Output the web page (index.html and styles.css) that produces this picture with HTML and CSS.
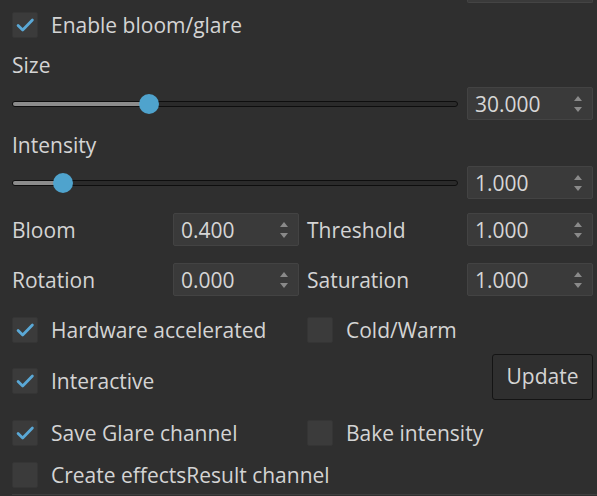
FILE: index.html
```html
<!DOCTYPE html>
<html>
<head>
<meta charset="utf-8">
<link rel="stylesheet" href="styles.css">
</head>
<body>
<div class="panel">
  <div class="stub-row"><div class="stub"></div></div>

  <div class="row cb-row first">
    <label class="check"><span class="box on"><svg viewBox="0 0 26 26"><path d="M5.5 13.5 L10.5 18.5 L21 7.5"/></svg></span><span class="txt">Enable bloom/glare</span></label>
  </div>

  <div class="label-row size-label">Size</div>
  <div class="slider-row r-size">
    <div class="slider"><div class="track"><div class="fill" style="width:30.7%"></div></div><div class="handle" style="left:30.7%"></div></div>
    <div class="spin"><span class="val">30.000</span><span class="arrows"><i class="up"></i><i class="down"></i></span></div>
  </div>

  <div class="label-row int-label">Intensity</div>
  <div class="slider-row r-int">
    <div class="slider"><div class="track"><div class="fill" style="width:11.4%"></div></div><div class="handle" style="left:11.4%"></div></div>
    <div class="spin"><span class="val">1.000</span><span class="arrows"><i class="up"></i><i class="down"></i></span></div>
  </div>

  <div class="grid4 r-bloom">
    <span class="lbl">Bloom</span>
    <div class="spin"><span class="val">0.400</span><span class="arrows"><i class="up"></i><i class="down"></i></span></div>
    <span class="lbl lbl2">Threshold</span>
    <div class="spin"><span class="val">1.000</span><span class="arrows"><i class="up"></i><i class="down"></i></span></div>
  </div>

  <div class="grid4 r-rot">
    <span class="lbl">Rotation</span>
    <div class="spin"><span class="val">0.000</span><span class="arrows"><i class="up"></i><i class="down"></i></span></div>
    <span class="lbl lbl2">Saturation</span>
    <div class="spin"><span class="val">1.000</span><span class="arrows"><i class="up"></i><i class="down"></i></span></div>
  </div>

  <div class="opts r-hw">
    <label class="check"><span class="box on"><svg viewBox="0 0 26 26"><path d="M5.5 13.5 L10.5 18.5 L21 7.5"/></svg></span><span class="txt">Hardware accelerated</span></label>
    <label class="check"><span class="box"></span><span class="txt">Cold/Warm</span></label>
  </div>

  <div class="opts r-inter">
    <label class="check inter"><span class="box on"><svg viewBox="0 0 26 26"><path d="M5.5 13.5 L10.5 18.5 L21 7.5"/></svg></span><span class="txt">Interactive</span></label>
    <div class="btn-cell"><button class="btn">Update</button></div>
  </div>

  <div class="opts r-save">
    <label class="check"><span class="box on"><svg viewBox="0 0 26 26"><path d="M5.5 13.5 L10.5 18.5 L21 7.5"/></svg></span><span class="txt">Save Glare channel</span></label>
    <label class="check"><span class="box"></span><span class="txt">Bake intensity</span></label>
  </div>

  <div class="row cb-row r-create">
    <label class="check"><span class="box"></span><span class="txt">Create effectsResult channel</span></label>
  </div>

  <div class="bottom-line"></div>
</div>
</body>
</html>
```

FILE: styles.css
```css
* { box-sizing: border-box; }
html, body {
  margin: 0;
  padding: 0;
  background: #2f2f2f;
  width: 597px;
  height: 496px;
  overflow: hidden;
}
.panel {
  font-family: "Open Sans", "Noto Sans", "DejaVu Sans", sans-serif;
  font-size: 21px;
  color: #d4d4d4;
  padding: 0 4px 0 12px;
}
.stub-row {
  display: flex;
  justify-content: flex-end;
  height: 3px;
}
.stub {
  width: 126px;
  height: 3px;
  background: #3a3a3a;
  border: 1px solid #444;
  border-top: none;
  border-radius: 0 0 2px 2px;
}
.row { display: flex; align-items: center; }
.cb-row { height: 26px; }
.first { margin-top: 9px; }

.check {
  display: flex;
  align-items: center;
  height: 26px;
}
.box {
  width: 26px;
  height: 26px;
  background: #3b3b3b;
  border: 1px solid #353535;
  border-radius: 2px;
  flex: none;
  display: flex;
}
.box svg { width: 24px; height: 24px; }
.box path {
  fill: none;
  stroke: #5aa8d6;
  stroke-width: 3;
  stroke-linecap: round;
  stroke-linejoin: round;
}
.txt { margin-left: 13px; white-space: nowrap; }

.label-row {
  height: 30px;
  display: flex;
  align-items: center;
}
.size-label { margin-top: 12px; }
.int-label { margin-top: 10px; }

.slider-row {
  display: flex;
  align-items: center;
  height: 33px;
}
.r-size { margin-top: 7px; }
.r-int { margin-top: 6px; }

.slider {
  flex: 1;
  margin-right: 9px;
  position: relative;
  height: 20px;
  display: flex;
  align-items: center;
}
.track {
  width: 100%;
  height: 6px;
  border: 1px solid #0e0e0e;
  border-radius: 3px;
  background: #2a2a2a;
  overflow: hidden;
}
.fill {
  height: 100%;
  background: #8c8c8c;
}
.handle {
  position: absolute;
  top: 0;
  width: 20px;
  height: 20px;
  margin-left: -10px;
  border-radius: 50%;
  background: #4fa3cd;
}

.spin {
  width: 126px;
  height: 33px;
  background: #3a3a3a;
  border: 1px solid #434343;
  border-radius: 2px;
  display: flex;
  align-items: center;
  justify-content: space-between;
  padding: 0 10px 0 7px;
  flex: none;
}
.val { font-size: 21px; color: #d6d6d6; }
.arrows {
  display: flex;
  flex-direction: column;
  gap: 6px;
  align-items: center;
}
.arrows i {
  display: block;
  width: 0;
  height: 0;
  border-left: 4px solid transparent;
  border-right: 4px solid transparent;
}
.arrows .up { border-bottom: 5px solid #8a8a8a; }
.arrows .down { border-top: 5px solid #8a8a8a; }

.grid4 {
  display: grid;
  grid-template-columns: 161px 126px 168px 126px;
  align-items: center;
  height: 33px;
}
.lbl2 { margin-left: 8px; }
.r-bloom { margin-top: 14px; }
.r-rot { margin-top: 17px; }

.opts {
  display: grid;
  grid-template-columns: 295px 1fr;
  align-items: start;
}
.r-hw { margin-top: 21px; }
.r-inter { margin-top: 11px; height: 46px; }
.r-inter .inter { margin-top: 14px; }
.btn-cell { display: flex; justify-content: flex-end; }
.btn {
  width: 101px;
  height: 46px;
  background: #2f2f2f;
  border: 1px solid #141414;
  border-radius: 3px;
  color: #d4d4d4;
  font-family: "Open Sans", "Noto Sans", "DejaVu Sans", sans-serif;
  font-size: 21px;
  padding: 0 0 3px 0;
}
.r-save { margin-top: 20px; }
.r-create { margin-top: 16px; }
.bottom-line {
  margin-top: 6px;
  height: 1px;
  background: #3e3e3e;
  margin-right: -4px;
}
```
